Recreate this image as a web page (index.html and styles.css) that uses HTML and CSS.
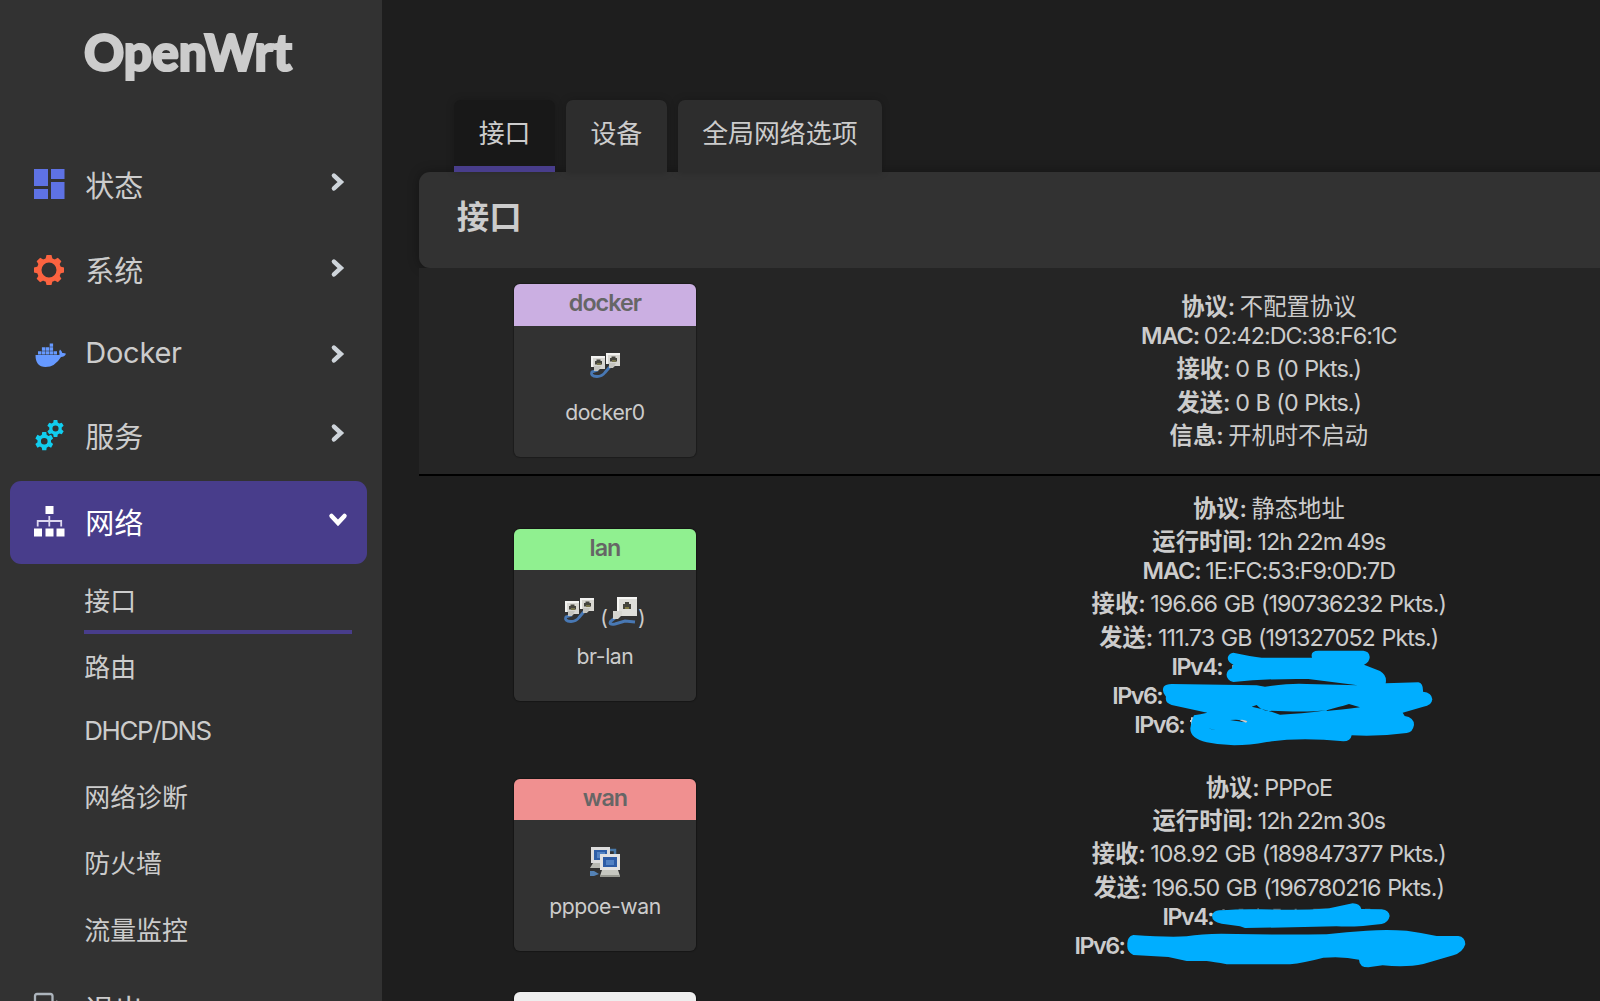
FILE: index.html
```html
<!DOCTYPE html>
<html lang="zh-CN">
<head>
<meta charset="utf-8">
<title>OpenWrt - 接口</title>
<link rel="stylesheet" href="styles.css">
</head>
<body>
<svg class="defs" aria-hidden="true">
  <defs>
    <symbol id="chev" viewBox="0 0 20 20"><path d="M5.500 2.800 13.200 10 5.500 17.200" fill="none" stroke="currentColor" stroke-width="5" stroke-linecap="round" transform="translate(1 1) scale(.9)"/></symbol>
    <symbol id="plug" viewBox="0 0 14 15">
      <path d="M0 0h14v13H9l-3 2H3v-4H0z" fill="#d8d7d2"/><path d="M0 0h14v2H2v9H0z" fill="#f2f2f0"/><path d="M4 5h1.500V3.500h4V5H11v3.500H4z" fill="#45453e"/><path d="M6 7h4v2H6z" fill="#77744c"/><path d="M3 10h7l-3 5H3z" fill="#c4c4bf"/>
    </symbol>
    <symbol id="bridge" viewBox="0 0 30 30">
      <path d="M8 18 2 20q-2 4 5 4.500 5 0 8-4l6-7" fill="none" stroke="#4878b4" stroke-width="2.800"/>
      <use href="#plug" x="1" y="4" width="14" height="15"/><use href="#plug" x="16" y="1" width="14" height="15"/>
    </symbol>
    <symbol id="eth" viewBox="0 0 30 30">
      <path d="M8 20 3 24q-3 4 4 3l10-3 10 1" fill="none" stroke="#4878b4" stroke-width="3"/>
      <path d="M9-.5h20V19H9z" fill="#dededa"/><path d="M9-.5h20V2H11v17H9z" fill="#f6f6f4"/>
      <path d="M15 7h2V5h4v2h2v5h-8z" fill="#45453e"/><path d="M17 10h4v2h-4z" fill="#817b43"/>
      <path d="M5 14h9v4l-4 4H5z" fill="#d6d6d1"/>
    </symbol>
    <symbol id="tunnel" viewBox="0 0 30 30">
      <path d="M20 3h5v6" fill="none" stroke="#4878a8" stroke-width="2.500"/>
      <path d="M1 0h19v16H1z" fill="#dcdcdc"/><path d="M4 3h13v10H4z" fill="#2e5fa8"/><path d="M7 5h8v6H7z" fill="#5484c4"/>
      <path d="M3 16h10v5H0z" fill="#b8b9b2"/><path d="M0 24h4l5 3-5 2H0z" fill="#5482b5"/>
      <path d="M10 7h20v16H10z" fill="#e2e2e2"/><path d="M13 10h14v10H13z" fill="#2d5ca6"/><path d="M16 13h8v5h-8z" fill="#5282c4"/>
      <path d="M12 23h16l2 6H10z" fill="#c6c7c0"/><path d="M10 28h20v2H10z" fill="#989991"/>
    </symbol>
    <symbol id="gear6" viewBox="-10 -10 20 20">
      <path fill-rule="evenodd" fill="currentColor" d="M-2.200-10h4.400l.4 3 2 1.200 2.800-1.100 2.200 3.800-2.300 1.900v2.400l2.300 1.900-2.200 3.800-2.800-1.100-2 1.200-.4 3h-4.400l-.4-3-2-1.200-2.800 1.100-2.200-3.800 2.300-1.900v-2.400l-2.300-1.900 2.200-3.800 2.800 1.100 2-1.200zM0-3.600A3.600 3.600 0 1 0 0 3.600 3.600 3.600 0 1 0 0-3.600z"/>
    </symbol>
  </defs>
</svg>
<div class="app">
  <aside class="sidebar">
    <div class="brand"><svg width="230" height="70" viewBox="0 0 230 70"><text class="brand-text" x="10" y="50.500" textLength="208" lengthAdjust="spacingAndGlyphs">OpenWrt</text></svg></div>
    <nav class="menu">
      <a class="item"><svg class="icon" viewBox="0 0 30 30"><path fill="#5e72e4" d="M0 0h14v17H0zM17 0h13.500v10H17zM0 20h14v10H0zM17 13h13.500v17H17z"/></svg><span class="label">状态</span><svg class="chev"><use href="#chev"/></svg></a>
      <a class="item"><svg class="icon" viewBox="-15 -15 30 30"><g fill="#fb6340"><circle r="9.800" fill="none" stroke="#fb6340" stroke-width="4.600"/><path id="tooth" d="M-3.500-11-2.500-15h5L3.500-11z"/><use href="#tooth" transform="rotate(45)"/><use href="#tooth" transform="rotate(90)"/><use href="#tooth" transform="rotate(135)"/><use href="#tooth" transform="rotate(180)"/><use href="#tooth" transform="rotate(225)"/><use href="#tooth" transform="rotate(270)"/><use href="#tooth" transform="rotate(315)"/></g></svg><span class="label">系统</span><svg class="chev"><use href="#chev"/></svg></a>
      <a class="item item-latin"><svg class="icon" viewBox="0 0 30 30"><path fill="#6699ff" d="M1.500 15h23q1.500 0 1-1-1-3 .5-4.500 2 1.500 2.300 3.500 2-.3 3.700.8-1.500 3.200-5 3.200Q21 27 11.500 27 1.500 27 1.500 15zM4 11.200h3.400v3.400H4zM7.900 11.200h3.400v3.400H7.900zM11.800 11.200h3.400v3.400h-3.400zM15.700 11.200h3.400v3.400h-3.400zM19.600 11.200h3.400v3.400h-3.400zM7.900 7.300h3.400v3.400H7.900zM11.800 7.300h3.400v3.400h-3.400zM15.700 7.300h3.400v3.400h-3.400zM15.700 3.400h3.400v3.400h-3.400z"/></svg><span class="label docker-label">Docker</span><svg class="chev"><use href="#chev"/></svg></a>
      <a class="item"><svg class="icon cyan" viewBox="0 0 30 30"><use href="#gear6" x="13" y="0" width="17" height="17"/><use href="#gear6" x="1" y="12" width="18.500" height="18.500"/></svg><span class="label">服务</span><svg class="chev"><use href="#chev"/></svg></a>
      <a class="item active"><svg class="icon" viewBox="0 0 30 30"><path fill="#fff" d="M11.500 0h8v8h-8zM0 22.500h8v8H0zM11.500 22.500h8v8h-8zM22.500 22.500h8v8h-8z"/><path d="M15.300 10v10.500M3.700 20.500V15h23.500v5.500" fill="none" stroke="#ddd8ef" stroke-width="1.800"/></svg><span class="label">网络</span><svg class="chev open"><use href="#chev"/></svg></a>
    </nav>
    <ul class="submenu">
      <li class="current"><a>接口</a></li>
      <li><a>路由</a></li>
      <li class="latin"><a class="en">DHCP/DNS</a></li>
      <li><a>网络诊断</a></li>
      <li><a>防火墙</a></li>
      <li><a>流量监控</a></li>
    </ul>
    <a class="item logout"><svg class="icon" viewBox="0 0 30 30"><path d="M18.500 10V3q0-2-2-2H3Q1 1 1 3v24q0 2 2 2h13.500q2 0 2-2v-7M9 15h19M22 8l7 7-7 7" fill="none" stroke="#adb5bd" stroke-width="2.300"/></svg><span class="label">退出</span></a>
  </aside>
  <main class="main">
    <div class="tabs"><a class="tab selected">接口</a><a class="tab">设备</a><a class="tab">全局网络选项</a></div>
    <section class="panel">
      <h3 class="title">接口</h3>
      <div class="row first">
        <div class="badge"><div class="zone docker en">docker</div><div class="dev"><div class="glyphs"><svg><use href="#bridge"/></svg></div><div class="name">docker0</div></div></div>
        <div class="details">
          <p class="cjk"><b>协议:</b> 不配置协议</p>
          <p><b class="en">MAC:</b> <span class="en">02:42:DC:38:F6:1C</span></p>
          <p class="cjk"><b>接收:</b> <span class="en">0 B (0 Pkts.)</span></p>
          <p class="cjk"><b>发送:</b> <span class="en">0 B (0 Pkts.)</span></p>
          <p class="cjk"><b>信息:</b> 开机时不启动</p>
        </div>
      </div>
      <div class="row second">
        <div class="badge"><div class="zone lan en">lan</div><div class="dev"><div class="glyphs"><svg><use href="#bridge"/></svg><span class="paren">(</span><svg><use href="#eth"/></svg><span class="paren">)</span></div><div class="name">br-lan</div></div></div>
        <div class="details">
          <p class="cjk"><b>协议:</b> 静态地址</p>
          <p class="cjk"><b>运行时间:</b> <span class="en time">12h 22m 49s</span></p>
          <p><b class="en">MAC:</b> <span class="en">1E:FC:53:F9:0D:7D</span></p>
          <p class="cjk"><b>接收:</b> <span class="en">196.66 GB (190736232 Pkts.)</span></p>
          <p class="cjk"><b>发送:</b> <span class="en">111.73 GB (191327052 Pkts.)</span></p>
          <p class="ip ip-a"><b>IPv4:</b></p>
          <p class="ip ip-b"><b>IPv6:</b></p>
          <p class="ip ip-c"><b>IPv6:</b></p>
          <svg class="ink ink-lan" viewBox="0 0 1260 780">
            <path d="M517 525h10v12h-10zM390 690h14v6h-14zM512 690q30-10 50 4v6zM400 682v24h-7v-24z" fill="#ccc"/>
            <path fill="#00aeff" d="M520 488Q575 500 605 503H756Q750 482 775 482H910Q928 484 929 500 930 515 912 524L960 543Q982 556 977 580L1075 577Q1090 580 1089 605 1116 608 1117 628 1115 648 1090 650L1028 668 1034 678Q1062 682 1062 705 1058 728 1040 729 960 740 875 736 872 754 850 754 720 740 620 756 520 775 440 757 390 745 391 715 395 690 402 676 420 673 442 668L335 645Q314 638 318 620 304 605 311 590 318 582 335 582L590 586 615 590Q700 578 740 582L893 586 745 567Q630 565 520 576 498 570 500 552 502 538 515 536L520 524Q500 515 504 500 508 489 520 488Z"/>
            <path d="M575 650 590 645Q600 657 618 662 740 668 800 661 720 672 660 674 620 659 575 650ZM510 690Q540 687 562 694 555 698 510 690ZM444 715 470 721 455 718Z" fill="#1e1e1e"/>
            <path d="M800 661 835 651Q850 648 867 642L900 652Q840 660 800 663Z" fill="#1e1e1e"/>
            <path d="M538 690Q552 687 562 694L558 698Z" fill="#ccc"/>
          </svg>
        </div>
      </div>
      <div class="row third">
        <div class="badge"><div class="zone wan en">wan</div><div class="dev"><div class="glyphs"><svg><use href="#tunnel"/></svg></div><div class="name">pppoe-wan</div></div></div>
        <div class="details">
          <p class="cjk"><b>协议:</b> <span class="en">PPPoE</span></p>
          <p class="cjk"><b>运行时间:</b> <span class="en time">12h 22m 30s</span></p>
          <p class="cjk"><b>接收:</b> <span class="en">108.92 GB (189847377 Pkts.)</span></p>
          <p class="cjk"><b>发送:</b> <span class="en">196.50 GB (196780216 Pkts.)</span></p>
          <p class="ip ip-d"><b>IPv4:</b></p>
          <p class="ip ip-e"><b>IPv6:</b></p>
          <svg class="ink ink-wan" viewBox="0 0 1260 660">
            <path d="M487 432h7v3h-7zM536 431h14v3h-14zM592 430h5v4h-5zM640 431h22v4h-22zM704 431h6v4h-6zM760 431h40v4h-40zM915 431h16v4h-16z" fill="#666"/>
            <path fill="#00aeff" d="M478 436Q550 431 600 433 760 436 808 430L878 415Q900 416 904 432L965 433Q988 436 989 453 985 473 965 477 890 487 830 484 700 487 555 489L540 484 485 476Q456 470 456 452 460 437 478 436ZM220 510Q320 517 380 514 440 503 530 507 660 510 800 508 860 500 920 497 980 493 1040 497 1090 504 1130 513H1195Q1215 515 1216 538 1208 563 1180 571L1090 597Q1040 608 968 601L925 607Q898 607 897 584 850 573 790 578 730 594 690 598H500Q460 590 440 588H380L325 576 220 570Q200 560 202 540 200 515 220 510Z"/>
          </svg>
        </div>
      </div>
      <div class="row fourth"><div class="badge"><div class="zone other"></div></div></div>
    </section>
  </main>
</div>
</body>
</html>
```
FILE: styles.css
```css
* { box-sizing: border-box; }
body { margin: 0; height: 1001px; overflow: hidden; background: #1e1e1e; color: #ccc; font-family: Inter, "Noto Sans CJK SC", sans-serif; }
p, h3, ul { margin: 0; padding: 0; }
.defs { position: absolute; width: 0; height: 0; }
.app { display: flex; height: 1001px; overflow: hidden; }

.sidebar { flex: 0 0 382px; height: 1001px; padding: 20px 15px 0 10px; background: #323232; overflow: hidden; }
.brand { height: 124.800px; padding-left: 64px; }
.brand-text { font: 900 51px Lato, sans-serif; fill: #ccc; stroke: #ccc; stroke-width: 2.200; }
.menu { display: flex; flex-direction: column; gap: 2.700px; }
.item { display: flex; height: 82.700px; padding: 0 19px 0 23.600px; border-radius: 11px; font-size: 29px; line-height: 40px; }
.item-latin { height: 77.400px; }
.icon { flex: none; width: 30px; height: 30px; margin: 24.500px 21.600px 0 0; overflow: visible; }
.cyan { color: #11cdef; }
.label { flex: 1; padding-top: 22px; }
.docker-label { padding-top: 17.800px; letter-spacing: -0.008em; }
.item-latin .chev { margin-top: 28.500px; }
.chev { width: 20px; height: 20px; margin-top: 27.500px; color: #ced4da; }
.active { background: #483d8b; color: #fff; }
.active .label { padding-top: 22.500px; }
.active .chev { color: #fff; margin-top: 28.500px; }
.open { transform: rotate(90deg); }
.submenu { list-style: none; padding: 1px 0 0 74.300px; font-size: 25.900px; line-height: 36px; }
.submenu li { height: 66.700px; padding-top: 19.500px; }
.submenu .current { height: 69px; width: 268px; border-bottom: 4px solid #483d8b; }
.submenu .current + li { height: 64px; padding-top: 16.500px; }
.submenu .latin { height: 62.500px; padding-top: 15px; }
.submenu .en { letter-spacing: -0.053em; }
.logout { margin-top: 8.500px; }

.main { flex: 1; min-width: 0; padding: 99.500px 0 0 37.300px; overflow: hidden; }
.tabs { display: flex; gap: 11.200px; height: 72.500px; padding-left: 35px; font-size: 25.900px; line-height: 36px; }
.tab { height: 72.500px; padding: 16.500px 24.400px 0; border-radius: 7px 7px 0 0; background: #2d2d2d; box-shadow: 0 0 8px #0003; }
.selected { background: #181818; border-bottom: 6px solid #483d8b; }
.panel { width: 1328px; }
.title { height: 95.500px; padding: 22.500px 0 0 37.500px; border-radius: 11px; background: #323232; box-shadow: 0 0 12px #0005; font-size: 32.400px; line-height: 46px; }
.row { display: grid; grid-template-columns: 371px 957px; }
.first { height: 208.500px; background: #252525; border-bottom: 2px solid #000; }
.second { height: 277px; }
.third { height: 223px; }

.badge { align-self: center; justify-self: center; width: 182.700px; height: 173px; border-radius: 6px; background: #323232; overflow: hidden; box-shadow: 0 0 1px 1px #0004; text-align: center; }
.badge { margin-left: 0.400px; }
.second .badge, .third .badge { height: 172.500px; margin-top: 1px; }
.zone { height: 41.300px; color: #666; font-size: 23.300px; font-weight: 600; line-height: 38px; }
.docker { background: #cbafe2; }
.lan { background: #90f090; }
.wan { background: #f09090; }
.other { background: #eee; }
.fourth .badge { margin-top: 16px; align-self: start; }
.glyphs { display: flex; justify-content: center; height: 56px; padding-top: 26.500px; }
.glyphs svg { width: 30px; height: 30px; }
.paren { padding: 0 0 0 6px; font-size: 21px; line-height: 42px; }
.glyphs svg + .paren:last-child { padding: 0; }
.name { font-size: 21.200px; line-height: 30px; padding-top: 15px; letter-spacing: -0.020em; }

.details { position: relative; padding-top: 20px; font-size: 23.300px; line-height: 29px; text-align: center; white-space: nowrap; word-spacing: -2px; }
.second .details { padding-top: 13.300px; }
.third .details { padding-top: 15.200px; }
.details p { height: 29px; }
.details .cjk { height: 33.400px; padding-top: 4.400px; }
.en { letter-spacing: -0.041em; word-spacing: 1px; }
.time { word-spacing: -1.500px; }
.details b { font-weight: 600; }
.details .ip { margin: 0 auto; text-align: left; letter-spacing: -0.065em; }
.details .ip-a { width: 194.500px; }
.details .ip-b { width: 313px; }
.details .ip-c { width: 269px; }
.details .ip-d { width: 212.500px; }
.details .ip-e { width: 388.500px; }
.ink { position: absolute; left: 269.700px; width: 420px; }
.ink-lan { top: 13.500px; height: 260px; }
.ink-wan { top: 11.500px; height: 220px; }
```
